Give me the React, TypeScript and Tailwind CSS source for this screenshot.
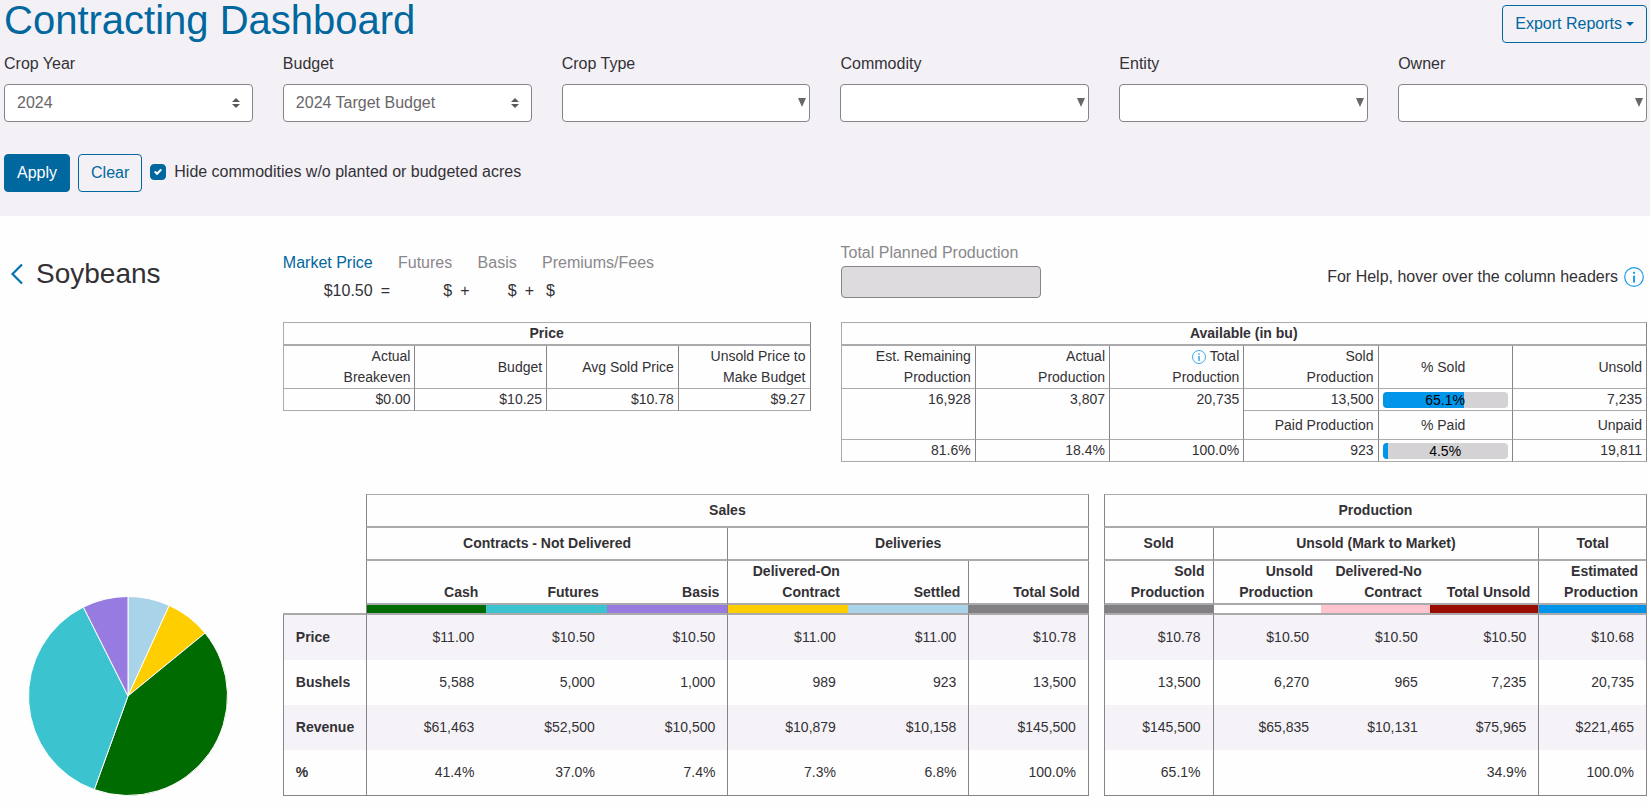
import React from 'react';

const FILTERS = [
  { id: 'crop-year', label: 'Crop Year', value: '2024', sortArrows: true },
  { id: 'budget', label: 'Budget', value: '2024 Target Budget', sortArrows: true },
  { id: 'crop-type', label: 'Crop Type', value: '', sortArrows: false },
  { id: 'commodity', label: 'Commodity', value: '', sortArrows: false },
  { id: 'entity', label: 'Entity', value: '', sortArrows: false },
  { id: 'owner', label: 'Owner', value: '', sortArrows: false },
];

// Slices run clockwise from 12 o'clock
const SLICES = [
  { name: 'Settled', pct: 6.8, color: '#a9d3e8' },
  { name: 'Delivered-On Contract', pct: 7.3, color: '#ffce00' },
  { name: 'Cash', pct: 41.4, color: '#006b00' },
  { name: 'Futures', pct: 37.1, color: '#3cc3d0' },
  { name: 'Basis', pct: 7.4, color: '#987be0' },
];

interface Column {
  title: string[];
  bar: string;
  values: string[];
  divider?: boolean;
}

const ROW_LABELS = ['Price', 'Bushels', 'Revenue', '%'];

// divider draws a line on the column's left side
const SALES: Column[] = [
  { title: ['Cash'], bar: 'bg-[#006b00]', values: ['$11.00', '5,588', '$61,463', '41.4%'], divider: true },
  { title: ['Futures'], bar: 'bg-[#3cc3d0]', values: ['$10.50', '5,000', '$52,500', '37.0%'] },
  { title: ['Basis'], bar: 'bg-[#987be0]', values: ['$10.50', '1,000', '$10,500', '7.4%'] },
  { title: ['Delivered-On', 'Contract'], bar: 'bg-[#ffce00]', values: ['$11.00', '989', '$10,879', '7.3%'], divider: true },
  { title: ['Settled'], bar: 'bg-[#a9d3e8]', values: ['$11.00', '923', '$10,158', '6.8%'] },
  { title: ['Total Sold'], bar: 'bg-[#828082]', values: ['$10.78', '13,500', '$145,500', '100.0%'], divider: true },
];

const PRODUCTION: Column[] = [
  { title: ['Sold', 'Production'], bar: 'bg-[#828082]', values: ['$10.78', '13,500', '$145,500', '65.1%'], divider: true },
  { title: ['Unsold', 'Production'], bar: 'bg-white', values: ['$10.50', '6,270', '$65,835', ''], divider: true },
  { title: ['Delivered-No', 'Contract'], bar: 'bg-[#ffc4cd]', values: ['$10.50', '965', '$10,131', ''] },
  { title: ['Total Unsold'], bar: 'bg-[#990d00]', values: ['$10.50', '7,235', '$75,965', '34.9%'] },
  { title: ['Estimated', 'Production'], bar: 'bg-[#0095e8]', values: ['$10.68', '20,735', '$221,465', '100.0%'], divider: true },
];

const InfoIcon = ({ className }: { className: string }) => (
  <svg viewBox="0 0 20 20" className={className} fill="none" aria-hidden="true">
    <circle cx="10" cy="10" r="9.3" stroke="#1a9be6" strokeWidth="1.2" />
    <rect x="9.1" y="4.8" width="1.9" height="2" fill="#1a9be6" />
    <rect x="9.1" y="8.6" width="1.9" height="7" fill="#1a9be6" />
  </svg>
);

const FilterSelect = ({ id, label, value, sortArrows }: (typeof FILTERS)[number]) => (
  <div>
    <label htmlFor={id} className="block mb-2">{label}</label>
    <div className="relative">
      <select
        id={id}
        className="block w-full h-[38px] appearance-none rounded border border-[#868488] bg-white pl-3 pr-8 text-[#69666a]"
      >
        <option>{value}</option>
      </select>
      {sortArrows ? (
        <svg viewBox="0 0 4 5" className="pointer-events-none absolute right-[13px] top-3.5 w-2 h-2.5" aria-hidden="true">
          <path d="M2 0L0 2h4zm0 5L0 3h4z" fill="#5b595c" />
        </svg>
      ) : (
        <svg viewBox="0 0 8 9" className="pointer-events-none absolute right-1 top-3.5 w-2 h-[9px]" aria-hidden="true">
          <path d="M0 0h8L4 9z" fill="#69666a" />
        </svg>
      )}
    </div>
  </div>
);

const PieChart = () => {
  const point = (pct: number) => {
    const angle = (pct / 100) * 2 * Math.PI;
    return `${100 + 99.5 * Math.sin(angle)} ${100 - 99.5 * Math.cos(angle)}`;
  };
  let start = 0;
  return (
    <svg viewBox="0 0 200 200" className="w-[200px] h-[200px]" role="img" aria-label="Soybeans by contract type">
      {SLICES.map((s) => {
        const from = start;
        start += s.pct;
        return (
          <path
            key={s.name}
            d={`M100 100L${point(from)}A99.5 99.5 0 0 1 ${point(start)}Z`}
            fill={s.color}
            stroke="#fff"
            strokeWidth="1"
          />
        );
      })}
    </svg>
  );
};

const ProgressBar = ({ value, label }: { value: number; label: string }) => (
  <div className="relative h-4 overflow-hidden rounded bg-[#d4d2d5]" role="progressbar" aria-valuenow={value} aria-label={label}>
    <div className="h-full bg-[#0095e8]" style={{ width: `${value}%` }} />
    <span className="absolute inset-0 text-center leading-4 text-black">{value.toFixed(1)}%</span>
  </div>
);

const cell = 'border-r border-b border-r-[#868488] border-b-[#aaa9ab] px-1 py-0';
const banner = 'border-t border-r border-b-2 border-t-[#aaa9ab] border-b-[#aaa9ab] border-r-[#868488] p-0 h-6';

const PriceTable = () => (
  <table className="w-full table-fixed border-separate border-spacing-0 border-l border-[#aaa9ab] text-right">
    <thead>
      <tr><th colSpan={4} className={`${banner} text-center`}>Price</th></tr>
      <tr className="h-[43px]">
        <th className={`${cell} font-normal`}>Actual<br />Breakeven</th>
        <th className={`${cell} font-normal`}>Budget</th>
        <th className={`${cell} font-normal`}>Avg Sold Price</th>
        <th className={`${cell} font-normal`}>Unsold Price to<br />Make Budget</th>
      </tr>
    </thead>
    <tbody>
      <tr className="h-[22px]">
        <td className={cell}>$0.00</td>
        <td className={cell}>$10.25</td>
        <td className={cell}>$10.78</td>
        <td className={cell}>$9.27</td>
      </tr>
    </tbody>
  </table>
);

const AvailableTable = () => (
  <table className="w-full table-fixed border-separate border-spacing-0 border-l border-[#aaa9ab] text-right">
    <thead>
      <tr><th colSpan={6} className={`${banner} text-center`}>Available (in bu)</th></tr>
      <tr className="h-[43px]">
        <th className={`${cell} font-normal`}>Est. Remaining<br />Production</th>
        <th className={`${cell} font-normal`}>Actual<br />Production</th>
        <th className={`${cell} font-normal`}>
          <InfoIcon className="inline w-3.5 h-3.5" /> Total<br />Production
        </th>
        <th className={`${cell} font-normal`}>Sold<br />Production</th>
        <th className={`${cell} pr-2 font-normal text-center`}>% Sold</th>
        <th className={`${cell} font-normal`}>Unsold</th>
      </tr>
    </thead>
    <tbody>
      <tr className="h-[22px]">
        <td rowSpan={2} className={`${cell} align-top`}>16,928</td>
        <td rowSpan={2} className={`${cell} align-top`}>3,807</td>
        <td rowSpan={2} className={`${cell} align-top`}>20,735</td>
        <td className={cell}>13,500</td>
        <td className={cell}><ProgressBar value={65.1} label="% Sold" /></td>
        <td className={cell}>7,235</td>
      </tr>
      <tr className="h-[29px]">
        <td className={cell}>Paid Production</td>
        <td className={`${cell} pr-2 text-center`}>% Paid</td>
        <td className={cell}>Unpaid</td>
      </tr>
      <tr className="h-[22px]">
        <td className={cell}>81.6%</td>
        <td className={cell}>18.4%</td>
        <td className={cell}>100.0%</td>
        <td className={cell}>923</td>
        <td className={cell}><ProgressBar value={4.5} label="% Paid" /></td>
        <td className={cell}>19,811</td>
      </tr>
    </tbody>
  </table>
);

interface BreakdownTableProps {
  title: string;
  groups: { name: string; span: number }[];
  columns: Column[];
  showLabels?: boolean;
}

const BreakdownTable = ({ title, groups, columns, showLabels }: BreakdownTableProps) => {
  const edges = (i: number) => {
    const left = columns[i].divider ? 'border-l border-l-[#868488]' : '';
    const right = i === columns.length - 1 ? 'border-r border-r-[#868488]' : '';
    return `${left} ${right}`;
  };

  return (
    <table className="w-full table-fixed border-separate border-spacing-0">
      <colgroup>
        {showLabels && <col className="w-[83px]" />}
        {columns.map((c) => <col key={c.title.join(' ')} />)}
      </colgroup>
      <thead>
        <tr className="h-[34px]">
          {showLabels && <td />}
          <th
            colSpan={columns.length}
            className="border-x border-t border-b-2 border-x-[#868488] border-t-[#aaa9ab] border-b-[#aaa9ab] p-0"
          >
            {title}
          </th>
        </tr>
        <tr className="h-[33px]">
          {showLabels && <td />}
          {groups.map((g, i) => (
            <th
              key={g.name}
              colSpan={g.span}
              className={`border-l border-b-2 border-l-[#868488] border-b-[#aaa9ab] p-0 ${i === groups.length - 1 ? 'border-r border-r-[#868488]' : ''}`}
            >
              {g.name}
            </th>
          ))}
        </tr>
        <tr className="h-11">
          {showLabels && <td />}
          {columns.map((c, i) => (
            <th
              key={c.title.join(' ')}
              className={`border-b-2 border-b-[#aaa9ab] py-0 pl-0 pr-2 text-right align-bottom ${edges(i)}`}
            >
              {c.title.map((line) => <span key={line} className="block">{line}</span>)}
            </th>
          ))}
        </tr>
        <tr className="h-2.5">
          {showLabels && <td className="border-b-2 border-[#aaa9ab] p-0" />}
          {columns.map((c, i) => (
            <td key={c.title.join(' ')} className={`border-b-2 border-b-[#aaa9ab] p-0 ${c.bar} ${edges(i)}`} />
          ))}
        </tr>
      </thead>
      <tbody>
        {ROW_LABELS.map((label, r) => {
          const last = r === ROW_LABELS.length - 1;
          const bottom = last ? 'border-b border-b-[#868488]' : '';
          return (
            <tr key={label} className={`${last ? 'h-[46px]' : 'h-[45px]'} ${r % 2 === 0 ? 'bg-[#f5f3f7]' : ''}`}>
              {showLabels && (
                <th scope="row" className={`border-l border-l-[#868488] py-0 pl-3 pr-0 text-left ${bottom}`}>{label}</th>
              )}
              {columns.map((c, i) => (
                <td key={c.title.join(' ')} className={`py-0 pl-0 pr-3 text-right ${edges(i)} ${bottom}`}>
                  {c.values[r]}
                </td>
              ))}
            </tr>
          );
        })}
      </tbody>
    </table>
  );
};

const App: React.FC = () => {
  return (
    <div className="min-h-screen bg-[#fefefe] font-['Liberation_Sans',Arial,sans-serif] text-base leading-6 text-[#333135]">
      {/* Title and filters */}
      <header className="bg-[#f3f1f5] pl-1 pr-[3px] pb-6">
        <div className="flex items-start justify-between">
          <h1 className="text-[40px] leading-10 text-[#00679f]">Contracting Dashboard</h1>
          <button type="button" className="mt-[5px] flex h-[38px] items-center gap-1 rounded border border-[#00679f] px-3 text-[#00679f]">
            Export Reports
            <svg viewBox="0 0 8 4" className="w-2 h-1" aria-hidden="true">
              <path d="M0 0h8L4 4z" fill="#00679f" />
            </svg>
          </button>
        </div>

        <div className="mt-[9px] grid grid-cols-6 gap-x-[30px]">
          {FILTERS.map((f) => <FilterSelect key={f.id} {...f} />)}
        </div>

        <div className="mt-8 flex items-center gap-2">
          <button type="button" className="h-[38px] rounded border border-[#00679f] bg-[#00679f] px-3 text-white">Apply</button>
          <button type="button" className="h-[38px] rounded border border-[#00679f] px-3 text-[#00679f]">Clear</button>
          <label className="flex items-center gap-2 pb-0.5">
            <span className="relative block h-4 w-4">
              <input type="checkbox" defaultChecked className="peer block h-4 w-4 appearance-none rounded border border-[#00679f] checked:bg-[#00679f]" />
              <svg viewBox="0 0 8 8" className="pointer-events-none absolute left-1 top-1 hidden h-2 w-2 peer-checked:block" aria-hidden="true">
                <path d="M6.564.75l-3.59 3.612-1.538-1.55L0 4.26 2.974 7.25 8 2.193z" fill="#fff" />
              </svg>
            </span>
            Hide commodities w/o planted or budgeted acres
          </label>
        </div>
      </header>

      <main className="pl-1 pr-[3px] pt-6">
        {/* Commodity summary */}
        <div className="grid grid-cols-6 gap-x-[30px]">
          <div className="flex items-center gap-3 self-start pt-4 pl-1.5">
            <a href="#commodities" aria-label="Back to commodities">
              <svg viewBox="0 0 14 22" className="w-3.5 h-[22px]" fill="none" aria-hidden="true">
                <path d="M12 1.5L2.5 11l9.5 9.5" stroke="#0074b3" strokeWidth="2.2" />
              </svg>
            </a>
            <h2 className="text-[28px] leading-9">Soybeans</h2>
          </div>

          <div className="col-span-2 pt-[11px]">
            <table className="whitespace-nowrap text-right">
              <thead>
                <tr className="h-7 align-top text-[#8a888b]">
                  <th className="p-0 font-normal text-[#00679f]">Market Price</th>
                  <td />
                  <th className="p-0 font-normal">Futures</th>
                  <td />
                  <th className="p-0 font-normal">Basis</th>
                  <td />
                  <th className="p-0 font-normal">Premiums/Fees</th>
                </tr>
              </thead>
              <tbody>
                <tr>
                  <td className="p-0">$10.50</td>
                  <td className="px-2 py-0">=</td>
                  <td className="p-0">$</td>
                  <td className="px-2 py-0">+</td>
                  <td className="p-0">$</td>
                  <td className="px-2 py-0">+</td>
                  <td className="py-0 pl-1 pr-0 text-left">$</td>
                </tr>
              </tbody>
            </table>
          </div>

          <div className="pt-px">
            <label htmlFor="planned" className="block whitespace-nowrap text-[#8a888b]">Total Planned Production</label>
            <input
              id="planned"
              type="text"
              disabled
              className="mt-px block h-8 w-[200px] rounded border border-[#868488] bg-[#dddbde] px-2"
            />
          </div>

          <div className="col-span-2 flex items-center justify-end gap-1.5 self-start pt-[25px] pr-[3px]">
            <span>For Help, hover over the column headers</span>
            <InfoIcon className="w-5 h-5" />
          </div>
        </div>

        <div className="mt-[19px] grid grid-cols-6 gap-x-[30px] text-sm leading-[21px]">
          <div className="col-span-2 col-start-2"><PriceTable /></div>
          <div className="col-span-3"><AvailableTable /></div>
        </div>

        {/* Contract breakdown */}
        <div className="mt-8 grid grid-cols-6 gap-x-[30px] text-sm leading-[21px]">
          <div className="flex items-end justify-center">
            <PieChart />
          </div>
          <div className="col-span-5 grid grid-cols-[806fr_543fr] gap-x-[15px]">
            <BreakdownTable
              title="Sales"
              groups={[{ name: 'Contracts - Not Delivered', span: 3 }, { name: 'Deliveries', span: 3 }]}
              columns={SALES}
              showLabels
            />
            <BreakdownTable
              title="Production"
              groups={[{ name: 'Sold', span: 1 }, { name: 'Unsold (Mark to Market)', span: 3 }, { name: 'Total', span: 1 }]}
              columns={PRODUCTION}
            />
          </div>
        </div>
      </main>
    </div>
  );
};

export default App;
